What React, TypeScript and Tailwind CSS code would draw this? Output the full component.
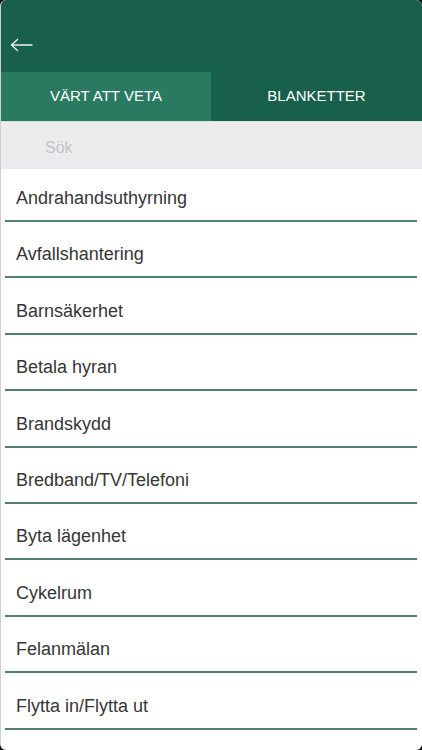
import React from "react";

const items = [
  "Andrahandsuthyrning",
  "Avfallshantering",
  "Barnsäkerhet",
  "Betala hyran",
  "Brandskydd",
  "Bredband/TV/Telefoni",
  "Byta lägenhet",
  "Cykelrum",
  "Felanmälan",
  "Flytta in/Flytta ut",
];

export default function App() {
  return (
    <div className="w-[422px] h-[750px] bg-[#111] overflow-hidden" style={{ fontFamily: '"Liberation Sans", Arial, sans-serif' }}>
      <div className="w-full h-full rounded-[6px] overflow-hidden bg-white flex flex-col border-l border-[#cfcfcf]">
        <div className="h-[72px] bg-[#185f4c] flex items-end pb-[20px] pl-[9px]">
          <svg width="23" height="14" viewBox="0 0 23 14" fill="none" stroke="#e8f2ee" strokeWidth="1.4" strokeLinecap="round" strokeLinejoin="round">
            <path d="M1.5 7h20.5" />
            <path d="M7.5 1.5L1.5 7l6 5.5" />
          </svg>
        </div>
        <div className="h-[49px] flex bg-[#185f4c] text-white text-[15px]">
          <div className="w-[210px] bg-[#2a7a62] flex items-center justify-center">VÄRT ATT VETA</div>
          <div className="flex-1 flex items-center justify-center">BLANKETTER</div>
        </div>
        <div className="h-[1px] bg-[#cde5dc]" />
        <div className="h-[47px] bg-[#ececee] flex items-center pl-[44px] pt-[4px] text-[16px] text-[#c3c3c7] shrink-0">Sök</div>
        {items.map((t, i) => (
          <div key={t} className={`flex flex-col justify-end shrink-0 ${i === 0 ? "h-[53px]" : "h-[56.4px]"}`}>
            <span className="pl-[15px] text-[18px] leading-[22px] text-[#363636] mb-[11px]">{t}</span>
            <div className="ml-[4px] mr-[5px] h-[2px] bg-[#4e7f72]" />
          </div>
        ))}
      </div>
    </div>
  );
}
